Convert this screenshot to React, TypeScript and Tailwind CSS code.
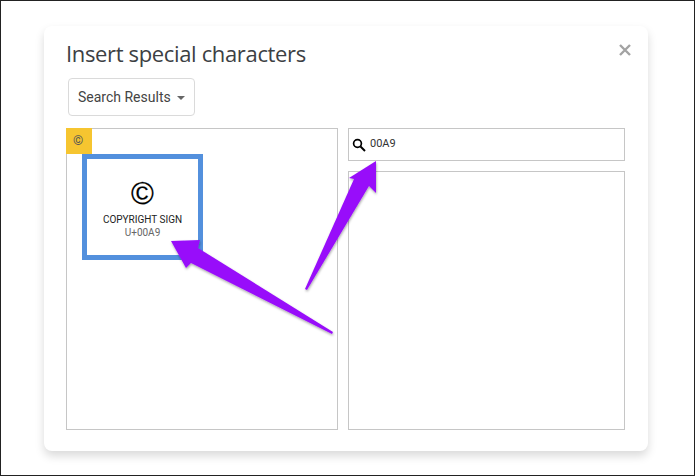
import React from 'react';

function Arrows() {
  return (
    <svg className="absolute left-0 top-0 pointer-events-none" width="695" height="476" viewBox="0 0 695 476">
      <defs>
        <filter id="arrowShadow" x="-10%" y="-10%" width="120%" height="120%">
          <feDropShadow dx="0.5" dy="1.5" stdDeviation="1" floodColor="#000" floodOpacity="0.35" />
        </filter>
      </defs>
      <g fill="#9810fa" filter="url(#arrowShadow)">
        {/* arrow to the character card */}
        <polygon points="170,240 199,239 197,247 332,331 331,333 190,262 185,267" />
        {/* arrow to the search box */}
        <polygon points="375,160 375,192 368,185 306,289 304,288 353,178 348,177" />
      </g>
    </svg>
  );
}

export default function App() {
  return (
    <div className="relative w-[695px] h-[476px] overflow-hidden bg-white border border-[#222] font-['Roboto',sans-serif]">
      <div className="ml-[43px] mt-[25px] w-[604px] h-[425px] rounded-[8px] bg-white shadow-[0_5px_10px_rgba(0,0,0,0.15)] relative pl-[22px] pr-[23px]">
        <svg className="absolute right-[17px] top-[18px]" width="12" height="12" viewBox="0 0 12 12">
          <path d="M1 1 L11 11 M11 1 L1 11" stroke="#a3a3a3" strokeWidth="2.4" />
        </svg>

        <h1 className="pt-[13px] h-[52px] text-[22px] leading-[28px] text-[#3c4043] font-['Open_Sans',sans-serif] tracking-[-0.35px]">
          Insert special characters
        </h1>

        <div className="ml-[2px] w-[127px] h-[38px] flex items-center pl-[9px] gap-[6px] rounded-[4px] border border-[#dadada] text-[14px] text-[#444]">
          <span>Search Results</span>
          <span className="w-0 h-0 mt-[1px] border-x-[4px] border-x-transparent border-t-[4px] border-t-[#666]" />
        </div>

        <div className="flex gap-[10px] mt-[12px]">
          <div className="relative w-[272px] h-[302px] border border-[#c6c6c6]">
            <div className="absolute -left-px -top-px w-[26px] h-[26px] bg-[#f6c530] pl-[7px] flex items-center text-[13px] text-[#555]">©</div>
            <div className="absolute left-[15px] top-[25px] w-[121px] h-[106px] border-[5px] border-[#5390dd] bg-white flex flex-col items-center">
              <span className="mt-[20px] h-[30px] text-[31px] leading-[30px] text-black font-['Liberation_Sans',sans-serif] [-webkit-text-stroke:0.2px_#000]">©</span>
              <span className="mt-[5px] text-[10px] leading-[12px] text-[#222]">COPYRIGHT SIGN</span>
              <span className="mt-[1px] text-[10px] leading-[12px] text-[#666]">U+00A9</span>
            </div>
          </div>

          <div className="flex flex-col gap-[10px] w-[277px]">
            <div className="h-[33px] border border-[#c6c6c6] flex items-center pl-[3px] gap-[4px]">
              <svg width="14" height="14" viewBox="0 0 14 14">
                <circle cx="5.5" cy="5.5" r="3.9" fill="none" stroke="#000" strokeWidth="1.7" />
                <path d="M8.5 8.5 L13 13" stroke="#000" strokeWidth="2" />
              </svg>
              <span className="text-[11px] text-[#333]">00A9</span>
            </div>
            <div className="h-[259px] border border-[#c6c6c6]" />
          </div>
        </div>
      </div>
      <Arrows />
    </div>
  );
}
